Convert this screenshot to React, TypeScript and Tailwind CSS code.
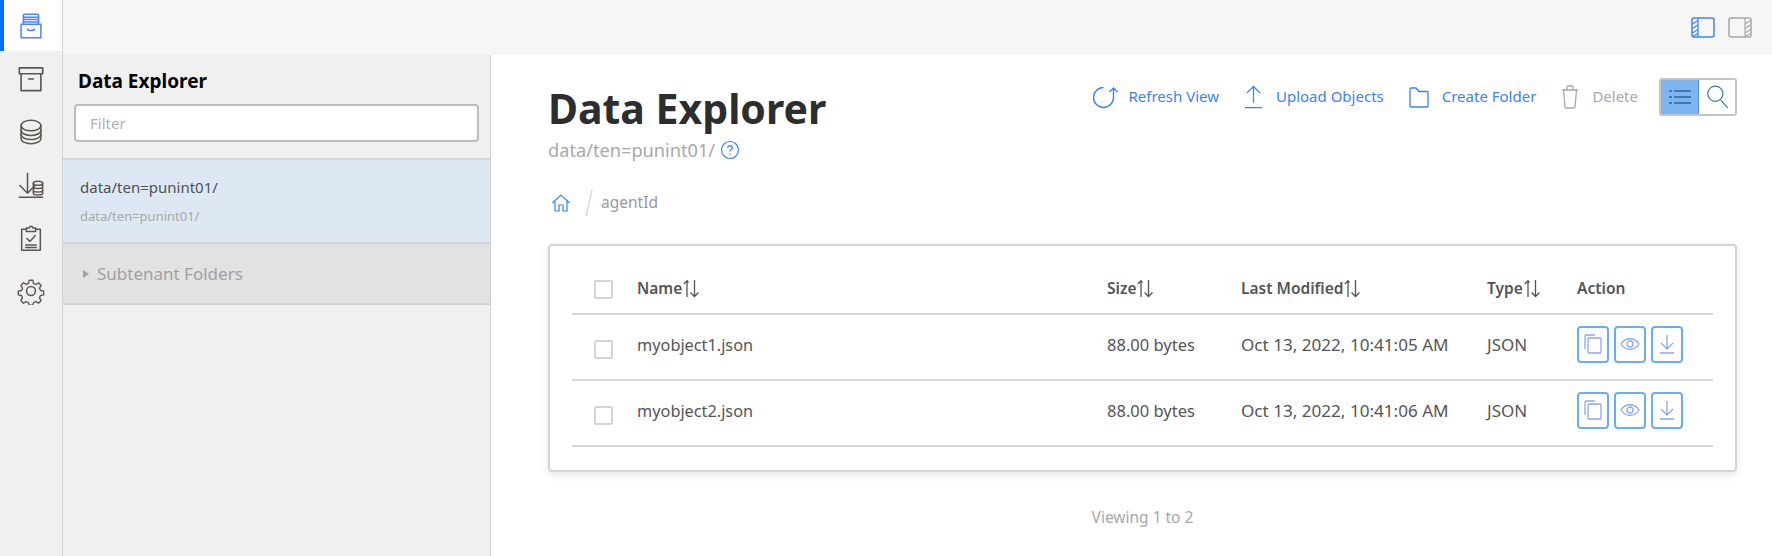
import React from 'react';

const BLUE = '#3b82f0';

function Svg({ size = 24, color = '#4d4d4d', sw = 1.4, children }: { size?: number; color?: string; sw?: number; children: React.ReactNode }) {
  return (
    <svg width={size} height={size} viewBox="0 0 24 24" fill="none" stroke={color} strokeWidth={sw} strokeLinecap="round" strokeLinejoin="round">
      {children}
    </svg>
  );
}

function DrawerIcon() {
  return (
    <Svg size={28} color="#4f83f5" sw={1.3}>
      <path d="M3.500 10.500h17v11.500h-17z" />
      <path d="M5.500 10.500V3c0-.6.4-1 1-1h11c.6 0 1 .4 1 1v7.500" />
      <path d="M5.500 4.500h13M5.500 6.500h13M5.500 8.500h13" />
      <path d="M9 14.500c0 1.800 6 1.800 6 0" />
    </Svg>
  );
}

function ArchiveIcon() {
  return (
    <Svg size={28} color="#5c5650">
      <path d="M2 2.500h20v5H2z" />
      <path d="M3.500 7.500V22h17V7.500" />
      <path d="M10 12h4" />
    </Svg>
  );
}

function DbIcon() {
  return (
    <Svg size={28} color="#5c5650" sw={1.3}>
      <ellipse cx="12" cy="6.500" rx="8.500" ry="4.500" />
      <path d="M3.500 6.500v11c0 2.500 3.800 4.500 8.500 4.500s8.500-2 8.500-4.500v-11" />
      <path d="M3.500 10.500c0 2.500 3.800 4.500 8.500 4.500s8.500-2 8.500-4.500M3.500 14c0 2.500 3.800 4.500 8.500 4.500s8.500-2 8.500-4.500" />
    </Svg>
  );
}

function ImportIcon() {
  return (
    <Svg size={28} color="#5c5650" sw={1.3}>
      <path d="M9 2v17M2.500 12.500 9 19l6-6" />
      <path d="M2 22.500h20" />
      <ellipse cx="18" cy="10.500" rx="4" ry="1.800" />
      <path d="M14 10.500V19c0 1 1.800 1.500 4 1.500s4-.5 4-1.500v-8.500M14 13.500c0 1 1.800 1.500 4 1.500s4-.5 4-1.500M14 16.500c0 1 1.800 1.500 4 1.500s4-.5 4-1.500" />
    </Svg>
  );
}

function ClipboardIcon() {
  return (
    <Svg size={28} color="#5c5650" sw={1.3}>
      <path d="M8 4.500H4v18h16v-18h-4" />
      <path d="M8 6.500v-3h2.500c0-2 3-2 3 0H16v3z" />
      <path d="m8.500 12.500 2.500 2.500 4.500-5" />
      <path d="M7.500 18h9M7.500 20.200h9" />
    </Svg>
  );
}

function GearIcon() {
  return (
    <Svg size={28} color="#5c5650" sw={1.3}>
      <circle cx="12" cy="12" r="3.800" />
      <path d="M10.200 1.800h3.600l.6 3 2.200 1 2.600-1.600 2.500 2.500-1.600 2.600 1 2.200 3 .6v3.600l-3 .6-1 2.200 1.600 2.600-2.500 2.500-2.600-1.600-2.200 1-.6 2.500h-3.600l-.6-2.500-2.200-1-2.600 1.600-2.500-2.500 1.600-2.600-1-2.200-3-.6v-3.600l3-.6 1-2.200L2.400 6.700l2.500-2.500 2.600 1.600 2.200-1z" transform="translate(1.200 1.200) scale(.9)" />
    </Svg>
  );
}

function PanelIcon({ side, color }: { side: 'left' | 'right'; color: string }) {
  const x = side === 'left' ? 1.500 : 17;
  return (
    <svg width="24" height="21" viewBox="0 0 24 21" fill="none" stroke={color} strokeWidth="1.500">
      <rect x="1" y="1" width="22" height="19" rx="2" />
      <path d={side === 'left' ? 'M7 1v19' : 'M17 1v19'} strokeWidth="1.200" />
      <path d={`M${x} 7l5.500-3.500M${x} 11.500l5.500-3.500M${x} 16l5.500-3.500M${x} 19.500l5.500-3`} strokeWidth="1.200" />
    </svg>
  );
}

function SortIcon() {
  return (
    <svg width="18" height="21" viewBox="0 0 18 21" fill="none" stroke="#555" strokeWidth="1.300" className="shrink-0">
      <path d="M5 19V3M1.800 6 5 2.800 6.500 4.500" />
      <path d="M12.500 2v16.500M8.500 14.500l4 4 4-4" />
    </svg>
  );
}

function ToolbarButton({ label, icon, disabled }: { label: string; icon: React.ReactNode; disabled?: boolean }) {
  return (
    <div className="flex items-center gap-[11px]">
      {icon}
      <span className={`text-[15px] ${disabled ? 'text-[#a8a8a8]' : 'text-[#3b82f0]'}`}>{label}</span>
    </div>
  );
}

function ActionButton({ children }: { children: React.ReactNode }) {
  return (
    <button className="w-[32px] h-[37px] border-2 border-[#6badf2] rounded-[4px] flex items-center justify-center">
      {children}
    </button>
  );
}

const rows = [
  { name: 'myobject1.json', modified: 'Oct 13, 2022, 10:41:05 AM' },
  { name: 'myobject2.json', modified: 'Oct 13, 2022, 10:41:06 AM' },
];

const gridCols = 'grid grid-cols-[65px_470px_134px_246px_90px_1fr] items-center';

function Checkbox({ className }: { className: string }) {
  return <div className={`ml-[22px] w-[19px] h-[19px] rounded-[2px] border-2 border-[#d4d4d4] bg-white ${className}`} />;
}

function HeaderCell({ label }: { label: string }) {
  return (
    <div className="flex items-center text-[15.5px] font-semibold text-[#555555]">
      {label}
      <SortIcon />
    </div>
  );
}

export default function App() {
  return (
    <div className="w-[1772px] h-[556px] flex overflow-hidden bg-white text-[#4d4d4d]" style={{ fontFamily: '"Noto Sans", sans-serif' }}>
      {/* Nav rail */}
      <nav className="w-[63px] shrink-0 bg-[#f0f0f0] border-r border-[#d4d4d4] flex flex-col">
        <div className="h-[51px] bg-white border-l-[4px] border-[#0a6cf0] flex items-center justify-center pr-[4px] mb-[1px]">
          <DrawerIcon />
        </div>
        {[<ArchiveIcon />, <DbIcon />, <ImportIcon />, <ClipboardIcon />, <GearIcon />].map((icon, i) => (
          <div key={i} className="h-[53px] flex items-center justify-center">{icon}</div>
        ))}
      </nav>

      <div className="flex-1 flex flex-col min-w-0">
        {/* Top bar */}
        <div className="h-[55px] bg-[#f6f6f6] flex items-center justify-end gap-[13px] pr-[20px]">
          <PanelIcon side="left" color="#3f86ee" />
          <PanelIcon side="right" color="#a8a8a8" />
        </div>

        <div className="flex-1 flex min-h-0">
          {/* Sidebar */}
          <aside className="w-[428px] shrink-0 bg-[#f0f0f0] border-r border-[#d4d4d4] flex flex-col">
            <div className="px-[11px] h-[105px] pt-[13px] border-b-2 border-[#d6d6d6]">
              <h2 className="pl-[4px] text-[19px] font-bold text-black leading-[26px]">Data Explorer</h2>
              <div className="mt-[10px] h-[38px] bg-white border-2 border-[#bcbcbc] rounded-[4px] flex items-center pl-[14px] text-[15px] text-[#b0b0b0]">Filter</div>
            </div>
            <div className="h-[84px] bg-[#dee8f4] border-b-2 border-[#d2d2d2] pl-[17px] pt-[16px]">
              <div className="text-[15px] leading-[22px] text-[#505050]">data/ten=punint01/</div>
              <div className="text-[13px] leading-[18px] mt-[9px] text-[#a8a8a8]">data/ten=punint01/</div>
            </div>
            <div className="h-[61px] bg-[#e2e2e2] border-b-2 border-[#d2d2d2] pl-[20px] flex items-center gap-[8px] text-[17px] text-[#a0a0a0]">
              <span className="w-0 h-0 border-y-[4px] border-y-transparent border-l-[6px] border-l-[#a0a0a0]" />
              Subtenant Folders
            </div>
          </aside>

          {/* Main */}
          <main className="flex-1 min-w-0 pl-[57px] pr-[35px] flex flex-col">
            <div className="flex justify-between">
              <div className="pt-[29px]">
                <h1 className="text-[41px] font-bold leading-[48px] text-[#2d2d2d]">Data Explorer</h1>
                <div className="mt-[6px] flex items-center gap-[5px] text-[18.2px] leading-[24px] text-[#a8a8a8]">
                  data/ten=punint01/
                  <svg width="20" height="20" viewBox="0 0 20 20" fill="none" stroke={BLUE} strokeWidth="1.200">
                    <circle cx="10" cy="10" r="8.500" />
                    <path d="M7.700 7.800c0-3 4.700-3 4.700 0 0 1.800-2.400 1.800-2.400 3.800M10 13.500v1.200" />
                  </svg>
                </div>
              </div>
              <div className="pt-[23px] flex items-start">
                <div className="flex items-center gap-[23px] h-[37px] mr-[21px]">
                  <ToolbarButton label="Refresh View" icon={
                    <svg width="25" height="24" viewBox="0 0 25 24" fill="none" stroke={BLUE} strokeWidth="1.400">
                      <path d="M10.500 2.500a10 10 0 1 0 10 10V3" />
                      <path d="m16.500 7 4-4 4 4" />
                    </svg>
                  } />
                  <ToolbarButton label="Upload Objects" icon={
                    <svg width="23" height="26" viewBox="0 0 24 26" fill="none" stroke={BLUE} strokeWidth="1.300">
                      <path d="M12 2v17M5 9l7-7 7 7M3 24h18" />
                    </svg>
                  } />
                  <ToolbarButton label="Create Folder" icon={
                    <svg width="24" height="24" viewBox="0 0 22 24" fill="none" stroke={BLUE} strokeWidth="1.300">
                      <path d="M2 21V4c0-.7.4-1 1-1h5l3 3.500h8c.7 0 1 .4 1 1V21c0 .6-.3 1-1 1H3c-.6 0-1-.4-1-1z" />
                    </svg>
                  } />
                  <ToolbarButton disabled label="Delete" icon={
                    <svg width="22" height="26" viewBox="0 0 20 26" fill="none" stroke="#a8a8a8" strokeWidth="1.300">
                      <path d="M2 6h16M7 5.500V3c0-.6.4-1 1-1h4c.6 0 1 .4 1 1v2.500M3.500 6l1.500 17c0 .6.4 1 1 1h8c.6 0 1-.4 1-1l1.500-17" />
                    </svg>
                  } />
                </div>
                <div className="flex w-[78px] h-[38px] rounded-[3px] border-2 border-[#c4c4c4] overflow-hidden">
                  <div className="w-[38px] bg-[#7eb5f0] border-r border-[#5d8dbe] flex items-center justify-center">
                    <svg width="24" height="18" viewBox="0 0 24 18" fill="none" stroke="#23679f" strokeWidth="1.300">
                      <path d="M6 3h17M6 9h17M6 15h17M1 3h3M1 9h3M1 15h3" />
                    </svg>
                  </div>
                  <div className="flex-1 flex items-center justify-center">
                    <svg width="25" height="26" viewBox="0 0 22 24" fill="none" stroke="#3d7e99" strokeWidth="1.100">
                      <circle cx="9" cy="9" r="7" />
                      <path d="m14 15 6.500 7" />
                    </svg>
                  </div>
                </div>
              </div>
            </div>

            {/* Breadcrumb */}
            <div className="mt-[26px] flex items-center h-[30px] text-[15.5px] text-[#9a9a9a]">
              <svg width="20" height="20" viewBox="0 0 20 20" fill="none" stroke={BLUE} strokeWidth="1.200" className="ml-[3px]">
                <path d="M1.500 10 10 2l8.500 8M4 8.500V18h4v-6h4v6h4V8.500" />
              </svg>
              <svg width="10" height="28" viewBox="0 0 10 28" fill="none" stroke="#d4d4d4" strokeWidth="1.300" className="ml-[13px] mr-[7px]">
                <path d="M8 1 2 27" />
              </svg>
              agentId
            </div>

            {/* Table card */}
            <section className="mt-[26px] h-[228px] border-2 border-[#d4d4d4] rounded-[4px] shadow-[0_3px_8px_rgba(0,0,0,0.1)] px-[22px] pt-[20px]">
              <div className={`${gridCols} h-[49px] pb-[2px] border-b-2 border-[#d6d6d6]`}>
                <Checkbox className="mt-[2px]" />
                <HeaderCell label="Name" />
                <HeaderCell label="Size" />
                <HeaderCell label="Last Modified" />
                <HeaderCell label="Type" />
                <div className="text-[15.5px] font-semibold text-[#555555]">Action</div>
              </div>
              {rows.map((r) => (
                <div key={r.name} className={`${gridCols} h-[66px] pb-[4px] border-b-2 border-[#d6d6d6] text-[16.5px] text-[#555555]`}>
                  <Checkbox className="mt-[9px]" />
                  <div className="text-[16.3px]">{r.name}</div>
                  <div>88.00 bytes</div>
                  <div className="text-[17.1px]">{r.modified}</div>
                  <div className="text-[17px]">JSON</div>
                  <div className="flex gap-[5px] mb-[2px]">
                    <ActionButton>
                      <svg width="20" height="22" viewBox="0 0 20 22" fill="none" stroke="#8aa8ee" strokeWidth="1.300">
                        <path d="M2 16V3c0-.6.4-1 1-1h9" />
                        <rect x="5" y="5" width="13" height="15" rx="1" />
                      </svg>
                    </ActionButton>
                    <ActionButton>
                      <svg width="20" height="14" viewBox="0 0 20 14" fill="none" stroke="#8aa8ee" strokeWidth="1.300">
                        <path d="M1 7c4.500-7 13.500-7 18 0-4.500 7-13.500 7-18 0z" />
                        <circle cx="10" cy="7" r="3" />
                      </svg>
                    </ActionButton>
                    <ActionButton>
                      <svg width="18" height="20" viewBox="0 0 18 20" fill="none" stroke="#8aa8ee" strokeWidth="1.300">
                        <path d="M9 1v13M3 9l6 6 6-6M2 19h14" />
                      </svg>
                    </ActionButton>
                  </div>
                </div>
              ))}
            </section>

            <div className="mt-[35px] text-center text-[15.5px] text-[#a8a8a8] leading-[20px]">Viewing 1 to 2</div>
          </main>
        </div>
      </div>
    </div>
  );
}
